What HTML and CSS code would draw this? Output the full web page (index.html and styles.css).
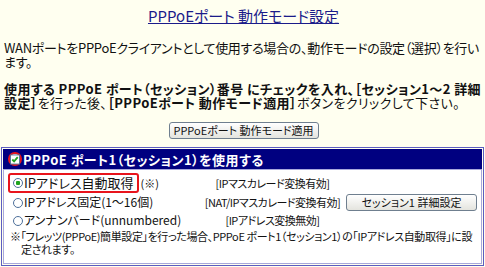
FILE: index.html
```html
<!DOCTYPE html>
<html lang="ja">
  <head>
    <meta charset="UTF-8" />
    <title>PPPoEポート 動作モード設定</title>
    <link rel="stylesheet" href="styles.css">
  </head>
  <body>
    <h1 class="title"><a href="#">PPPoEポート 動作モード設定</a></h1>

    <p class="lead">WANポートをPPPoEクライアントとして使用する場合の、動作モードの設定（選択）を行います。</p>

    <p class="guide">
      <b>使用する PPPoE ポート（セッション）番号 にチェックを入れ、［セッション1～2 詳細設定］</b>を行った後、<b>［PPPoEポート 動作モード適用］</b>ボタンをクリックして下さい。
    </p>

    <div class="apply">
      <button type="button" class="btn btn-apply">PPPoEポート 動作モード適用</button>
    </div>

    <div class="panel">
      <div class="panel-head">
        <span class="mark">
          <svg class="check" width="11" height="11" viewBox="0 0 11 11">
            <rect x="0.5" y="0.5" width="10" height="10" fill="#fff" stroke="#4b6f96" />
            <path d="M2.5 5.5 L4.5 7.5 L8.5 3" fill="none" stroke="#21a121" stroke-width="2" />
          </svg>
        </span>
        <span>PPPoE ポート1（セッション1）を使用する</span>
      </div>

      <div class="panel-body">
        <table class="modes">
          <tr>
            <td class="opt">
              <span class="hl"><span class="radio on"></span>IPアドレス自動取得</span><span class="ref">(※)</span>
            </td>
            <td class="conv">[IPマスカレード変換有効]</td>
            <td class="act"></td>
          </tr>
          <tr>
            <td class="opt"><span class="radio"></span>IPアドレス固定(1～16個)</td>
            <td class="conv">[NAT/IPマスカレード変換有効]</td>
            <td class="act"><button type="button" class="btn btn-detail">セッション1 詳細設定</button></td>
          </tr>
          <tr>
            <td class="opt"><span class="radio"></span>アンナンバード(unnumbered)</td>
            <td class="conv">[IPアドレス変換無効]</td>
            <td class="act"></td>
          </tr>
        </table>
        <p class="note">※「フレッツ(PPPoE)簡単設定」を行った場合、PPPoE ポート1（セッション1）の「IPアドレス自動取得」に設定されます。</p>
      </div>
    </div>
  </body>
</html>
```

FILE: styles.css
```css
body {
  background-color: #fffff0;
  font-family: "Noto Sans CJK JP", sans-serif;
  font-feature-settings: "palt";
  color: #111;
  margin: 0;
  padding: 0 2px 0 4px;
  font-size: 13px;
}

.title {
  margin: 0;
  padding-top: 6px;
  text-align: center;
  font-size: 15px;
  font-weight: normal;
  line-height: 20px;
}

.title a {
  color: #1b1b8a;
}

.lead {
  margin: 15px 0 0;
  line-height: 14px;
  letter-spacing: -0.3px;
}

.guide {
  margin: 13px 0 0;
  line-height: 14px;
  letter-spacing: 0.4px;
}

.apply {
  text-align: center;
  margin-top: 10px;
}

.btn {
  font-family: "Noto Sans CJK JP", sans-serif;
  font-feature-settings: "palt";
  font-size: 11px;
  color: #111;
  background: linear-gradient(#ffffff, #e4e4de);
  border: 1px solid #6f7f8f;
  border-radius: 3px;
  padding: 0;
  height: 17px;
  line-height: 14px;
}

.btn-apply {
  width: 150px;
}

.btn-detail {
  width: 131px;
}

.panel {
  margin: 8px -1px 0 -3px;
  border: 1px solid #5c5cc0;
  padding: 1px;
}

.panel-head {
  background-color: #000080;
  color: #fff;
  font-weight: bold;
  letter-spacing: 0.5px;
  height: 20px;
  display: flex;
  align-items: center;
  gap: 1px;
  padding-left: 5px;
}

.mark {
  display: flex;
  align-items: center;
  justify-content: center;
  width: 10px;
  height: 10px;
  border: 2px solid #e8141c;
  border-radius: 50%;
  background-color: #fff;
}

.panel-body {
  background-color: #fff;
  border: 1px solid #a8a8dc;
  padding: 3px 4px 7px;
}

.modes {
  border-collapse: collapse;
  width: 100%;
  font-size: 12px;
}

.modes td {
  padding: 0;
  height: 18px;
  line-height: 16px;
}

.opt {
  width: 194px;
  white-space: nowrap;
}

.hl {
  display: inline-flex;
  align-items: center;
  height: 16px;
  border: 2px solid #e8141c;
  border-radius: 3px;
  padding: 0 3px 0 3px;
  font-size: 13px;
}

.radio {
  display: inline-block;
  box-sizing: border-box;
  width: 10px;
  height: 10px;
  border: 1px solid #4d6f9a;
  border-radius: 50%;
  background-color: #fff;
  margin: 0 1px 0 5px;
  vertical-align: -1px;
}

.hl .radio {
  margin-left: 0;
}

.radio.on {
  background: radial-gradient(circle, #1ea41e 0 2px, #fff 2.5px);
}

.ref {
  font-size: 11px;
  margin-left: 2px;
}

.conv {
  font-size: 11px;
  letter-spacing: -0.5px;
  text-align: center;
}

.act {
  width: 134px;
  text-align: right;
}

.note {
  margin: 1px 0 0 2px;
  font-size: 11px;
  line-height: 13px;
  letter-spacing: -0.4px;
  padding-left: 1em;
  text-indent: -1em;
}
```
